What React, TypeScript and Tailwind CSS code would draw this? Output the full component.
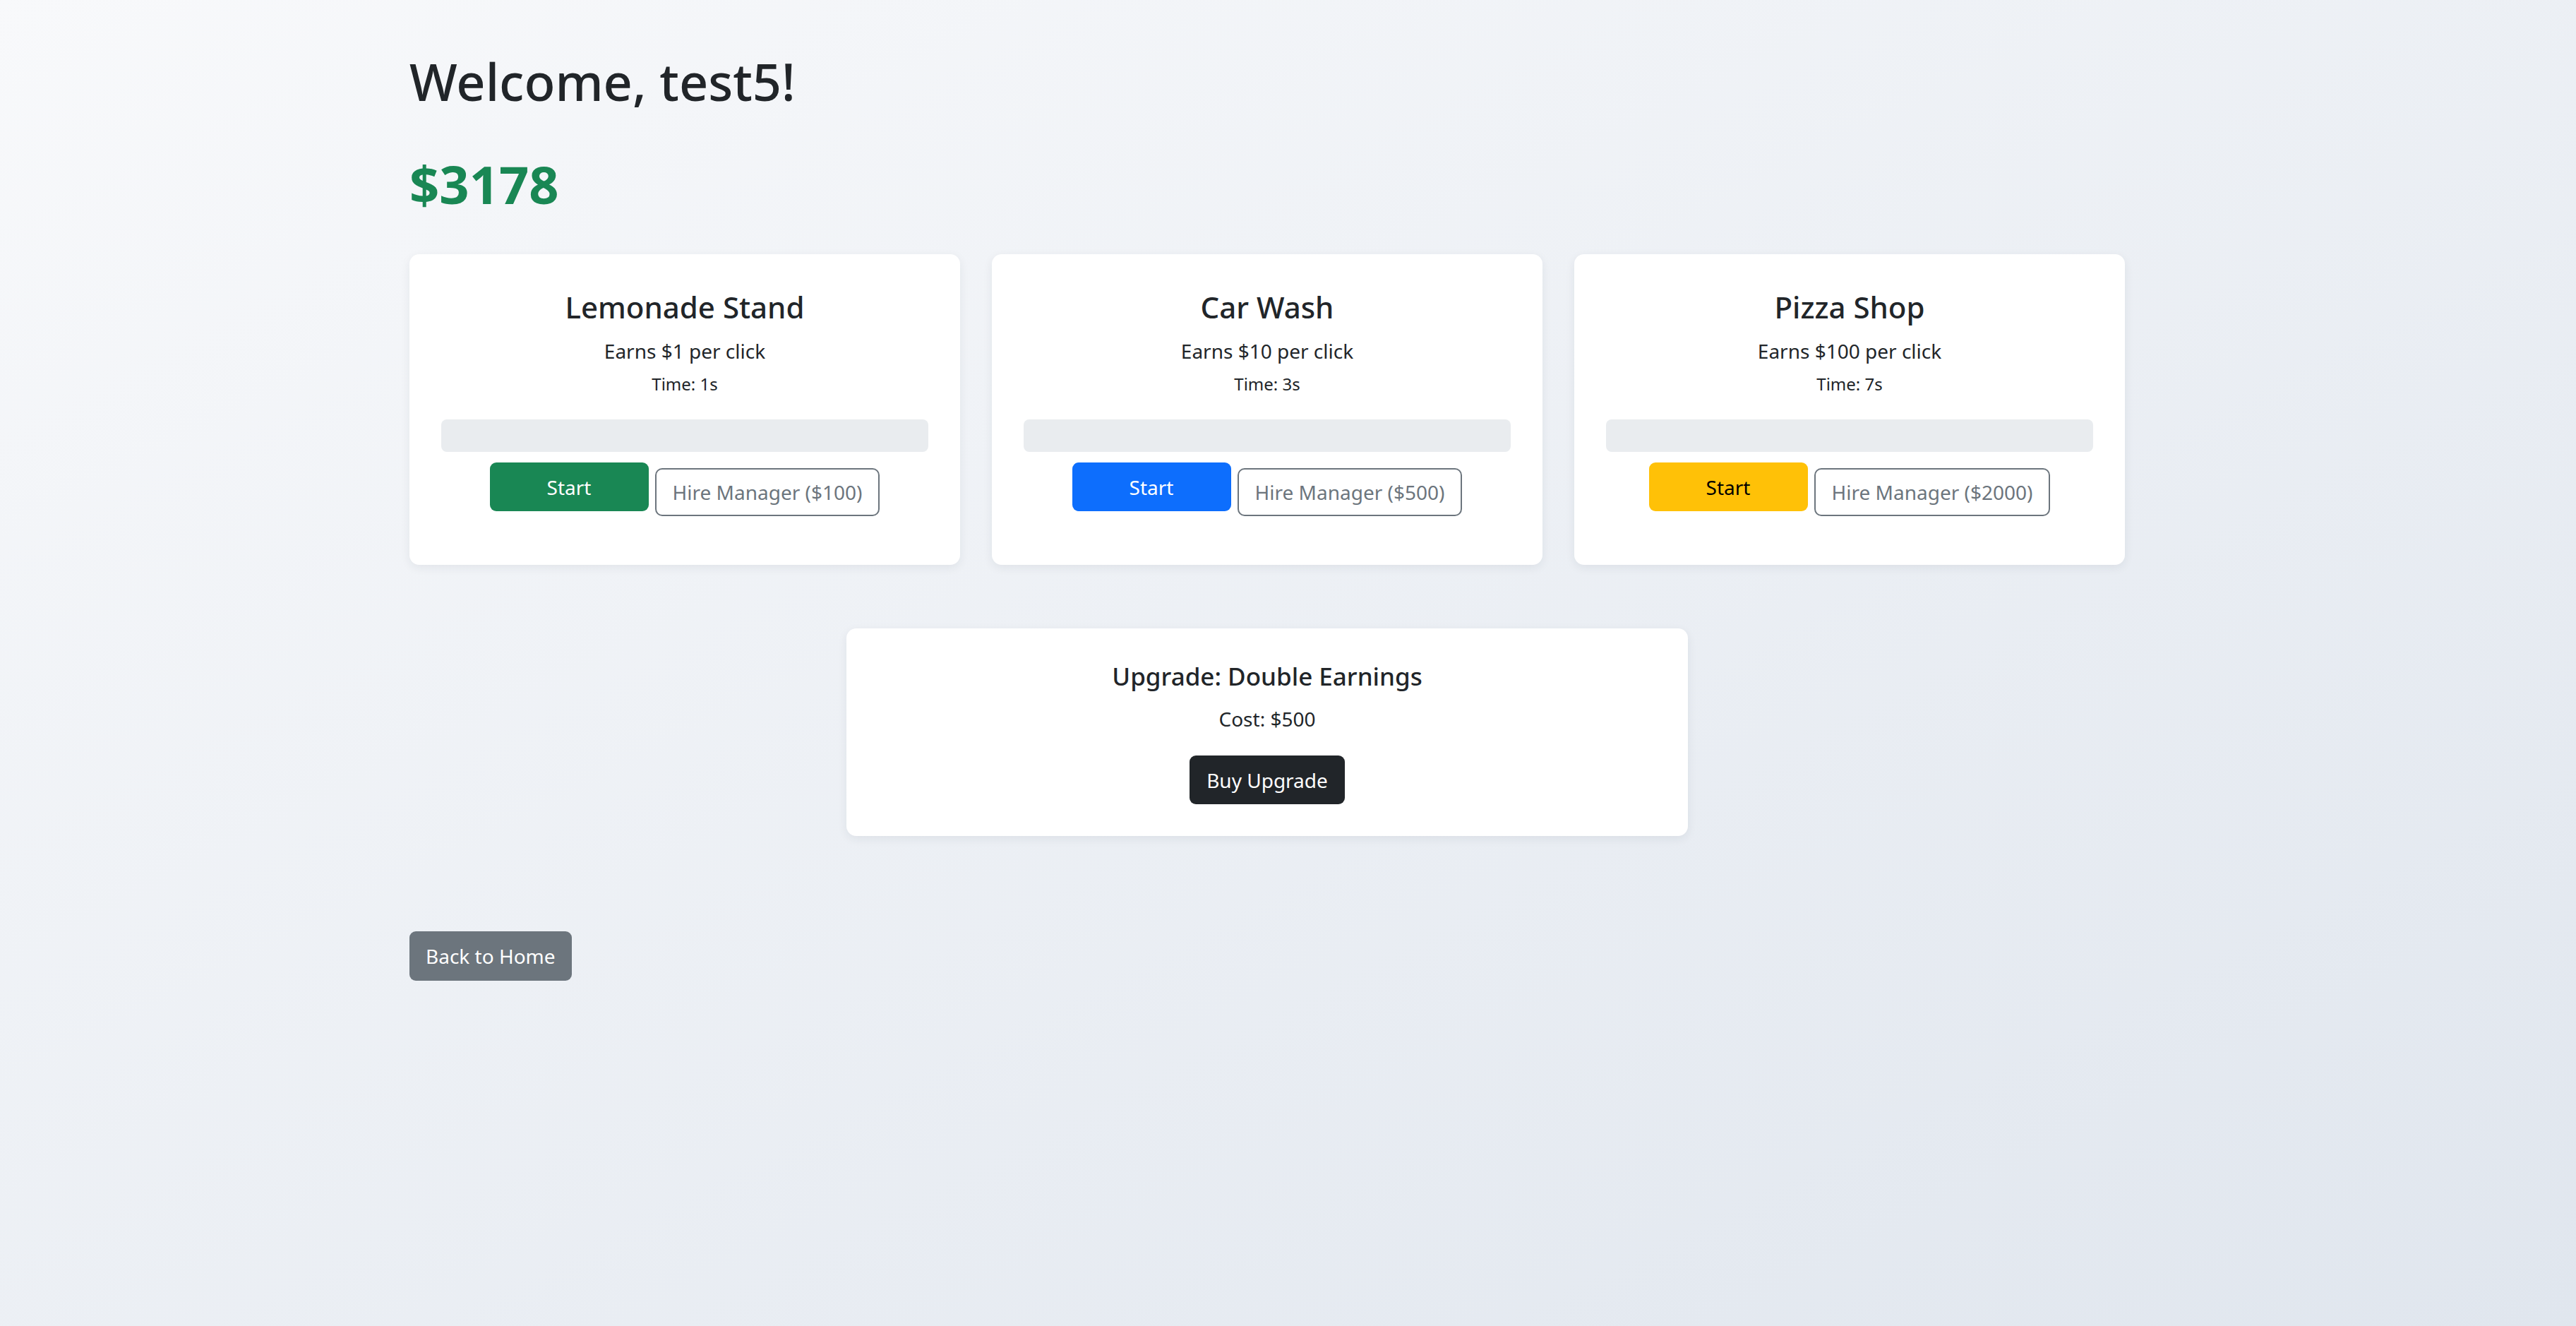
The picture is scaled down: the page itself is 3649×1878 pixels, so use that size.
import React from 'react'

interface Business {
  id: string
  name: string
  earns: number
  time: number
  managerCost: number
  startClass: string
}

const businesses: Business[] = [
  { id: 'lemonade', name: 'Lemonade Stand', earns: 1, time: 1, managerCost: 100, startClass: 'bg-[#198754] text-white' },
  { id: 'carwash', name: 'Car Wash', earns: 10, time: 3, managerCost: 500, startClass: 'bg-[#0d6efd] text-white' },
  { id: 'pizza', name: 'Pizza Shop', earns: 100, time: 7, managerCost: 2000, startClass: 'bg-[#ffc107] text-black' },
]

function BusinessCard({ b }: { b: Business }) {
  return (
    <div className="bg-white rounded-[14px] shadow-[0_4px_14px_rgba(30,40,60,0.07)] px-[45px] pt-[50px] pb-[69px] text-center text-[#212529]">
      <h4 className="text-[42px] leading-[50px] font-medium">{b.name}</h4>
      <p className="mt-[16px] text-[28px] leading-[42px]">Earns ${b.earns} per click</p>
      <p className="mt-[8px] text-[24px] leading-[36px]">Time: {b.time}s</p>

      {/* progress */}
      <div className="mt-[32px] h-[46px] rounded-[8px] bg-[#e9ecef] overflow-hidden">
        <div className="h-full w-0 bg-[#0d6efd]" />
      </div>

      <div className="mt-[15px] flex justify-center items-start gap-[9px]">
        <button className={`w-[225px] h-[69px] rounded-[9px] text-[28px] ${b.startClass}`}>Start</button>
        <button className="mt-[8px] h-[68px] px-[23px] rounded-[10px] border-2 border-[#6c757d] bg-white text-[#6c757d] text-[28px]">
          Hire Manager (${b.managerCost})
        </button>
      </div>
    </div>
  )
}

export default function App() {
  return (
    <div className="min-h-screen bg-linear-to-br from-[#f8f9fb] to-[#e0e6ee] font-['Noto_Sans',sans-serif] text-[#212529]">
      <div className="w-[2430px] ml-[580px] pt-[71px] pb-[200px]">
        <h1 className="text-[72px] leading-[88px] font-medium">Welcome, test5!</h1>
        <h2 className="mt-[58px] text-[74px] leading-[88px] font-bold text-[#198754]">$3178</h2>

        <div className="mt-[55px] grid grid-cols-3 gap-[45px]">
          {businesses.map((b) => (
            <BusinessCard key={b.id} b={b} />
          ))}
        </div>

        <div className="mt-[90px] w-[1192px] mx-auto bg-white rounded-[14px] shadow-[0_4px_14px_rgba(30,40,60,0.07)] pt-[46px] pb-[45px] text-center">
          <h5 className="text-[35px] leading-[44px] font-medium">Upgrade: Double Earnings</h5>
          <p className="mt-[17px] text-[28px] leading-[42px]">Cost: $500</p>
          <button className="mt-[31px] h-[69px] px-[24px] rounded-[9px] bg-[#212529] text-white text-[28px]">
            Buy Upgrade
          </button>
        </div>

        <button className="mt-[135px] h-[70px] px-[23px] rounded-[9px] bg-[#6c757d] text-white text-[28px] block">
          Back to Home
        </button>
      </div>
    </div>
  )
}
